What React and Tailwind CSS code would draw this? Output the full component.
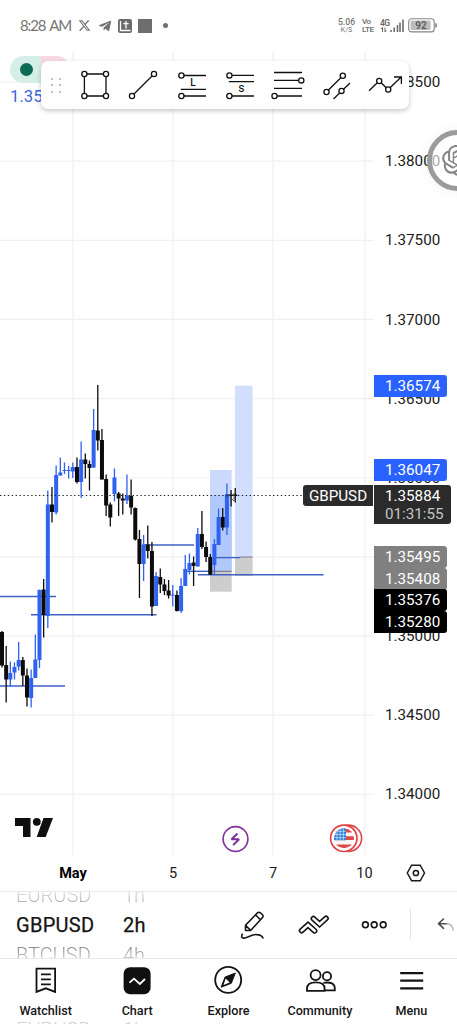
import { FaXTwitter } from "react-icons/fa6";
import { FaTelegramPlane } from "react-icons/fa";
import { SiOpenai } from "react-icons/si";

const BLUE = "#2f62f0";
const DARK = "#0c0c0c";

// [high, low, body top, body bottom, up]
const candles = [
  [631, 667.5, 632, 665.5, 0],
  [646, 702.5, 665, 679.5, 0],
  [661.5, 686.5, 673, 679.5, 1],
  [662.5, 679.5, 667, 672.5, 1],
  [642, 670.5, 660, 666.5, 1],
  [657, 686, 660, 675.5, 0],
  [668.5, 706.5, 675.5, 697.5, 0],
  [669.5, 707.5, 678, 698, 1],
  [634.5, 678, 659.5, 678, 1],
  [589.5, 668, 590, 660, 1],
  [579, 637.5, 589.5, 615, 0],
  [490.5, 628, 504.5, 616, 1],
  [487, 522.5, 504.5, 512, 0],
  [465.5, 514.5, 475, 512.5, 1],
  [457.5, 475.5, 472.5, 475.5, 1],
  [462.5, 474, 470, 471, 1],
  [466, 478.5, 470, 471, 1],
  [462.5, 478, 467, 471.5, 1],
  [457.5, 483.5, 467, 482, 0],
  [441.5, 498, 459.5, 482, 1],
  [453.5, 478.5, 459.5, 464, 0],
  [460.5, 490.5, 464, 468, 0],
  [409, 468, 430, 467.5, 1],
  [385, 450.5, 430.5, 440.5, 0],
  [429, 479.5, 440, 479.5, 0],
  [474.5, 516, 479, 505.5, 0],
  [502.5, 526.5, 504.5, 517.5, 0],
  [468.5, 501.5, 477.5, 494, 1],
  [492, 516, 493.5, 498.5, 0],
  [493.5, 514.5, 498.5, 500.5, 0],
  [474.5, 504, 495.5, 500.5, 1],
  [479.5, 514.5, 496, 507.5, 0],
  [507.5, 540.5, 508, 539.5, 0],
  [530, 598, 539, 564, 0],
  [535, 581, 544.5, 564, 1],
  [525.5, 558.5, 544.5, 551, 0],
  [542, 616, 551, 606.5, 0],
  [572, 606, 576, 606, 1],
  [568.5, 593, 577, 584.5, 0],
  [579, 595, 584.5, 591, 0],
  [580, 598.5, 590.5, 595.5, 0],
  [585, 606.5, 594.5, 595.5, 1],
  [590.5, 611.5, 595, 611, 0],
  [578, 613, 586, 611, 1],
  [555, 586, 569, 586, 1],
  [553.5, 574.5, 563, 570, 1],
  [556.5, 586, 562.5, 566, 0],
  [528, 566.5, 534, 566.5, 1],
  [511, 549, 534, 547, 0],
  [541.5, 562, 547, 557, 0],
  [554, 575, 557, 574.5, 0],
  [539, 574, 544, 565, 1],
  [508.5, 545, 517, 545, 1],
  [508, 530.5, 517, 527.5, 0],
  [483.5, 535, 494, 527.5, 1],
  [490, 506.5, 494.5, 496, 0],
  [488, 502.5, 494.5, 496, 0],
];

const levels = [
  [0, 56, 596.5],
  [31, 156.5, 614.8],
  [0, 65, 686],
  [143, 194, 545],
  [187, 211, 571.3],
  [213, 240, 557.6],
  [198, 323.5, 574.8],
];

const prices = [
  "1.38500",
  "1.38000",
  "1.37500",
  "1.37000",
  "1.36500",
  "1.36000",
  "1.35500",
  "1.35000",
  "1.34500",
  "1.34000",
];

function StatusBar() {
  return (
    <div className="flex h-[51px] shrink-0 items-center pl-[20px] pr-[20px] text-[#747474]">
      <span className="w-[50px] whitespace-nowrap font-['Lato'] text-[15px] tracking-[-1.1px] [word-spacing:1.5px]">
        8:28 AM
      </span>
      <FaXTwitter className="ml-[8px] size-[13px]" />
      <FaTelegramPlane className="ml-[7px] size-[14px]" />
      <svg className="ml-[6px]" width="14" height="14" viewBox="0 0 14 14">
        <rect width="14" height="14" rx="2" fill="#6b6b6b" />
        <path d="M8 2v7.5M5.3 4.6h5.4M2.5 2v9.5h10" stroke="#fff" strokeWidth="1.3" fill="none" />
      </svg>
      <div className="ml-[6px] size-[14px] bg-[#6e6e6e]" />
      <div className="ml-[11px] size-[5px] rounded-full bg-[#6e6e6e]" />
      <div className="ml-auto flex w-[19px] flex-col items-center leading-[8px]">
        <span className="text-[8.6px] font-medium">5.06</span>
        <span className="text-[7px]">K/S</span>
      </div>
      <div className="ml-[6px] flex w-[14px] flex-col text-[8px] font-semibold leading-[8px] tracking-[-0.4px]">
        <span>Vo</span>
        <span>LTE</span>
      </div>
      <svg className="ml-[4px]" width="25" height="15" viewBox="0 0 25 15">
        <text x="0" y="7.5" fontSize="8.5" fontWeight="600" fill="#666" letterSpacing="-0.5">4G</text>
        <path d="M2.5 14V9.5l-1.5 1.5M5 9.5V14l1.5-1.5" stroke="#666" fill="none" />
        <path d="M11 14v-2M14.2 14V9.5M17.5 14V7M20 14V4.5M23 14V1.5" stroke="#666" strokeWidth="1.5" />
      </svg>
      <svg className="ml-[3px]" width="29" height="15" viewBox="0 0 29 15">
        <rect x="0.7" y="0.7" width="25.5" height="13.2" rx="3" fill="#fff" stroke="#858585" strokeWidth="1.1" />
        <rect x="2.6" y="2.6" width="20" height="9.4" rx="1.2" fill="#bdbdbd" />
        <path d="M28 5.2v4.4" stroke="#777" strokeWidth="1.5" />
        <text x="13" y="10.8" fontSize="10" fontWeight="600" fill="#5c5c5c" textAnchor="middle">92</text>
      </svg>
    </div>
  );
}

function Dot({ x, y }) {
  return <circle cx={x} cy={y} r="2.6" fill="#fff" />;
}

function Tool({ children }) {
  return (
    <svg
      className="shrink-0"
      width="48.3"
      height="48"
      viewBox="0 0 48.3 48"
      fill="none"
      stroke="#111"
      strokeWidth="1.3"
    >
      {children}
    </svg>
  );
}

function DrawingToolbar() {
  return (
    <div className="absolute left-[41px] top-[10px] flex h-[48px] w-[368px] rounded-[7px] bg-white shadow-[0_2px_5px_rgba(0,0,0,0.22)]">
      <div className="flex w-[30px] items-center justify-center">
        <div className="grid grid-cols-2 gap-x-[6px] gap-y-[4.5px]">
          {[0, 1, 2, 3, 4, 5].map(i => (
            <div key={i} className="size-[2px] rounded-full bg-[#a8a8a8]" />
          ))}
        </div>
      </div>
      <Tool>
        <path d="M13.4 13h21.6v22H13.4z" />
        <Dot x="13.4" y="13" />
        <Dot x="35" y="13" />
        <Dot x="13.4" y="35" />
        <Dot x="35" y="35" />
      </Tool>
      <Tool>
        <path d="M13 35L35 13" />
        <Dot x="13" y="35" />
        <Dot x="35" y="13" />
      </Tool>
      <Tool>
        <path d="M13.4 14.5H38M12.8 28.4H38M13.4 35H38" />
        <Dot x="13.4" y="14.5" />
        <Dot x="13.4" y="35" />
        <text x="25" y="25.3" fontSize="10" fontWeight="500" fill="#111" stroke="none" textAnchor="middle">L</text>
      </Tool>
      <Tool>
        <path d="M13.4 14.4H38M12.8 20.7H38M13.4 35H38" />
        <Dot x="13.4" y="14.4" />
        <Dot x="13.4" y="35" />
        <text x="25.4" y="31.4" fontSize="9.5" fontWeight="500" fill="#111" stroke="none" textAnchor="middle">S</text>
      </Tool>
      <Tool>
        <path d="M10 11.5h28M10 19.4h27M10 27.3h28M10.5 35H38" />
        <Dot x="37.3" y="19.4" />
        <Dot x="10.5" y="35" />
      </Tool>
      <Tool>
        <path d="M14.5 31L30.8 14.7M21.5 38L38 22" />
        <Dot x="14.5" y="31" />
        <Dot x="30.8" y="14.7" />
        <Dot x="29.5" y="29.9" />
      </Tool>
      <Tool>
        <path d="M8 29.8l10.2-9.8 9 8.5L40.2 16M33 16h7.4v7" />
        <Dot x="18.2" y="20" />
        <Dot x="27.2" y="28.5" />
      </Tool>
    </div>
  );
}

function Plot() {
  return (
    <svg className="block shrink-0" width="374" height="804" viewBox="0 51 374 804">
      <g stroke="#f0f0f0" strokeWidth="1.2">
        {[73, 173, 273, 365].map(x => (
          <path key={x} d={`M${x} 51V855`} />
        ))}
        {prices.map((p, i) => (
          <path key={p} d={`M0 ${82 + i * 79.15}H374`} />
        ))}
      </g>

      {/* long positions */}
      <rect x="210" y="470" width="21.7" height="101" fill="#cbdafc" />
      <rect x="210" y="495" width="21.7" height="76" fill="#b0c8fb" />
      <rect x="210" y="571" width="21.7" height="20.7" fill="#cdcdcd" />
      <rect x="235" y="385.7" width="17.6" height="171.3" fill="#d1defe" />
      <rect x="235" y="557" width="17.6" height="19" fill="#cdcdcd" />
      <path d="M211 571.3h20.7M240 557h12.6" stroke="#7d7f89" strokeWidth="1.2" />

      {levels.map(([x1, x2, y]) => (
        <path key={y} d={`M${x1} ${y}H${x2}`} stroke="#3f61c4" strokeWidth="1.4" />
      ))}

      {candles.map(([high, low, top, bottom, up], i) => {
        const x = 2 + i * 4.165;
        const color = up ? BLUE : DARK;
        return (
          <g key={i} fill={color}>
            <rect x={x - 0.65} y={high} width="1.3" height={low - high} />
            <rect x={x - 2} y={top} width="4" height={bottom - top} />
          </g>
        );
      })}
      <path d="M226 498l3-4 2 4 3 3V493" stroke="#444" strokeWidth="0.8" fill="none" />
      <path d="M0 495.5H303" stroke="#222" strokeWidth="1.2" strokeDasharray="1.4 2.5" />

      <g fill="#0f0f0f">
        <path d="M15 818h15.5v19H23v-11h-8zM43.5 818H53l-7.3 19h-9z" />
        <circle cx="36.8" cy="821.8" r="3.9" />
      </g>

      <circle cx="235.5" cy="839" r="12.4" fill="#fff" stroke="#7d2f9c" strokeWidth="1.6" />
      <path d="M237.5 833.5l-6 5.8h7.6l-6 5.8" stroke="#7d2f9c" strokeWidth="2" fill="none" strokeLinejoin="bevel" />

      <circle cx="348.4" cy="838.3" r="13.2" fill="#fff" stroke="#df4147" strokeWidth="1.6" />
      <circle cx="343.8" cy="838.3" r="13.2" fill="#fff" stroke="#df4147" strokeWidth="1.7" />
      <clipPath id="flag">
        <circle cx="344" cy="838.3" r="10" />
      </clipPath>
      <g clipPath="url(#flag)">
        <rect x="334" y="828" width="20" height="21" fill="#fbf5f5" />
        <path d="M334 830.5h20M334 838.2h20M334 846.3h20" stroke="#dc4a4a" strokeWidth="3.8" />
        <rect x="334" y="828" width="12" height="12.3" fill="#2f80d4" />
        <path d="M337 828v12M340.2 828v12M343.4 828v12M334 831.3h12M334 834.5h12M334 837.7h12" stroke="#cfe5fb" strokeWidth="0.7" />
      </g>
    </svg>
  );
}

function Tag({ children, className }) {
  return (
    <div className={`absolute left-0 flex h-[22px] w-[73px] items-center rounded-r-[3px] pl-[11px] pt-px text-white ${className}`}>
      {children}
    </div>
  );
}

function PriceScale() {
  return (
    <div className="relative h-[804px] flex-1 overflow-hidden text-[15.2px] text-[#1b1b1b]">
      <div className="mt-[-8px] flex flex-col">
        {prices.map(p => (
          <div key={p} className="flex h-[79.15px] items-center pl-[11px]">
            {p}
          </div>
        ))}
      </div>
      <Tag className="top-[324px] bg-[#2962ff]">1.36574</Tag>
      <Tag className="top-[408px] bg-[#2962ff]">1.36047</Tag>
      <div className="absolute left-0 top-[434px] flex h-[39px] w-[77px] flex-col rounded-r-[3px] bg-[#2b2b2b] pl-[11px] leading-[18px] text-white">
        <span className="pt-[2px]">1.35884</span>
        <span className="text-[#c4c4c4]">01:31:55</span>
      </div>
      <Tag className="top-[495px] bg-[#808080]">1.35495</Tag>
      <Tag className="top-[517px] bg-[#808080]">1.35408</Tag>
      <Tag className="top-[538px] bg-black">1.35376</Tag>
      <Tag className="top-[560px] bg-black">1.35280</Tag>
    </div>
  );
}

function Chart() {
  return (
    <div className="relative flex h-[804px] shrink-0">
      <Plot />
      <PriceScale />
      <div className="absolute left-[303px] top-[434px] flex h-[21px] w-[70px] items-center justify-center rounded-l-[3px] bg-[#2b2b2b] pt-px text-[15.2px] text-white">
        GBPUSD
      </div>
      <div className="absolute left-[10px] top-[5px] flex h-[27px] w-[60px] overflow-hidden rounded-full">
        <div className="flex w-[31px] items-center bg-[#d5efe8] pl-[10px]">
          <div className="size-[13px] rounded-full bg-[#0c6b55]" />
        </div>
        <div className="flex-1 bg-[#fbd8e1]" />
      </div>
      <div className="absolute left-[10px] top-[34px] text-[16.8px] leading-[22px] text-[#3b66dc]">
        1.35
      </div>
      <DrawingToolbar />
      <div className="absolute left-[427px] top-[79px] flex size-[61px] items-center justify-center rounded-full border-[5px] border-[#9b9b9b] bg-white/60 shadow-[0_0_14px_rgba(0,0,0,0.06)]">
        <SiOpenai className="size-[31px] shrink-0 text-[#858585]" />
      </div>
    </div>
  );
}

function TimeScale() {
  return (
    <div className="flex h-[36px] shrink-0 items-center pl-[23px] text-center text-[14.5px] text-[#1b1b1b]">
      <span className="w-[100px] pt-[2px] font-bold text-black">May</span>
      <span className="w-[100px] pt-[2px]">5</span>
      <span className="w-[100px] pt-[2px]">7</span>
      <span className="w-[83px] pt-[2px]">10</span>
      <svg width="20" height="18" viewBox="0 0 20 18" fill="none" stroke="#1b1b1b" strokeWidth="1.5">
        <path d="M5.6 1.2h8.6l4.3 7.8-4.3 7.8H5.6L1.3 9z" />
        <circle cx="9.9" cy="9" r="2.6" />
      </svg>
    </div>
  );
}

function Wheel({ items, className }) {
  return (
    <div className={`flex h-[66px] flex-col overflow-hidden text-[20px] leading-[29px] ${className}`}>
      <span className="mt-[-11px] bg-linear-to-b from-[#dedede] from-40% to-[#a2a2a2] to-85% bg-clip-text font-light text-transparent">
        {items[0]}
      </span>
      <span className="py-[1px] tracking-[0.3px] text-[#141414] [-webkit-text-stroke:0.25px_#141414]">
        {items[1]}
      </span>
      <span className="bg-linear-to-b from-[#8f8f8f] from-25% to-[#e4e4e4] to-75% bg-clip-text font-light text-transparent">
        {items[2]}
      </span>
    </div>
  );
}

function SymbolBar() {
  return (
    <div className="flex h-[68px] shrink-0 items-center border-y border-[#e9e9e9] pl-[16px]">
      <Wheel className="w-[107px]" items={["EURUSD", "GBPUSD", "BTCUSD"]} />
      <Wheel className="w-[37px]" items={["1h", "2h", "4h"]} />
      <svg
        className="ml-[77px] shrink-0"
        width="220"
        height="66"
        viewBox="237 892 220 66"
        fill="none"
        stroke="#161616"
        strokeWidth="1.6"
        strokeLinejoin="round"
        strokeLinecap="round"
      >
        <path d="M245.5 930.5v-5.2l11.7-12.2q1.6-1.6 3.2-.2l1.8 1.6q1.6 1.6.1 3.3L250.6 930.5zM245.8 925.6l4.8 4.7M255.4 914.8l5 5" />
        <path d="M242.2 934.2q-1.6 3.8 1.4 3.9c4 0 8-4 13.2-3.5q4.8.3 6.2 3.4" />
        <path d="M301.6 930.6l6.4-5.7 6.6 5.9" strokeWidth="5.8" strokeLinejoin="miter" />
        <path d="M301.6 930.6l6.4-5.7 6.6 5.9" stroke="#fff" strokeWidth="2.6" strokeLinejoin="miter" />
        <path d="M313.4 918.6l6.2 5.6 6.4-5.8" strokeWidth="5.8" strokeLinejoin="miter" />
        <path d="M313.4 918.6l6.2 5.6 6.4-5.8" stroke="#fff" strokeWidth="2.6" strokeLinejoin="miter" />
        <circle cx="365.4" cy="924.8" r="2.9" />
        <circle cx="374.2" cy="924.8" r="2.9" />
        <circle cx="383.2" cy="924.8" r="2.9" />
        <path d="M410.5 909v30" stroke="#e4e4e4" strokeWidth="1" />
        <path d="M443.5 919l-5 4.7 5 4.7M439 923.7h8" stroke="#4c4c4c" />
        <path d="M447 923.7q5.5.4 6.3 6.5" stroke="#b9b9b9" />
      </svg>
    </div>
  );
}

function NavItem({ label, children }) {
  return (
    <div className="flex flex-1 flex-col items-center pt-[5px]">
      <svg width="34" height="34" viewBox="0 0 34 34" fill="none" stroke="#131313" strokeWidth="1.8">
        {children}
      </svg>
      <span className="pt-px text-[12.6px] font-medium leading-[24px] text-[#161616]">{label}</span>
    </div>
  );
}

function BottomNav() {
  return (
    <div className="relative flex h-[65px] shrink-0 overflow-hidden">
      <NavItem label="Watchlist">
        <path d="M7.5 4.7h18.6v23.2l-9.3-3.6-9.3 3.6z" />
        <path d="M12 10.4h9.8M12 15.4h9.8M12 20.3h9.8" />
      </NavItem>
      <NavItem label="Chart">
        <rect x="3.6" y="3.2" width="27" height="27" rx="6.5" fill="#101010" stroke="none" />
        <path d="M9.5 18.6l4.5-4 5.8 5.4 5.2-5" stroke="#fff" />
      </NavItem>
      <NavItem label="Explore">
        <circle cx="16.2" cy="15.9" r="13" />
        <path d="M23.3 9.1l-4 10.2-10.2 3.9 4-10.2z" fill="#131313" strokeWidth="1" />
        <path d="M13.7 14.6l4 3.9-6.2 2.5z" fill="#fff" stroke="none" />
      </NavItem>
      <NavItem label="Community">
        <circle cx="12.6" cy="11.1" r="5" />
        <circle cx="24" cy="12.3" r="4.1" />
        <path d="M4 26.9v-2.2q0-6.3 8.8-6.3t8.8 6.3v2.2zM20.4 18.8q11.3-1.6 11.4 5.4v2.2H21.6" />
      </NavItem>
      <NavItem label="Menu">
        <path d="M6.2 9.2h23M6.2 16.7h23M6.2 24.3h23" strokeWidth="2.2" />
      </NavItem>
      <div className="absolute left-[16px] top-[59px] flex text-[20px] font-light leading-[24px] text-[#d2d2d2]">
        <span className="w-[107px]">EURUSD</span>
        <span>1h</span>
      </div>
    </div>
  );
}

export default function App() {
  return (
    <div className="flex h-[1024px] w-[457px] flex-col overflow-hidden bg-white font-['Roboto',sans-serif]">
      <StatusBar />
      <Chart />
      <TimeScale />
      <SymbolBar />
      <BottomNav />
    </div>
  );
}
